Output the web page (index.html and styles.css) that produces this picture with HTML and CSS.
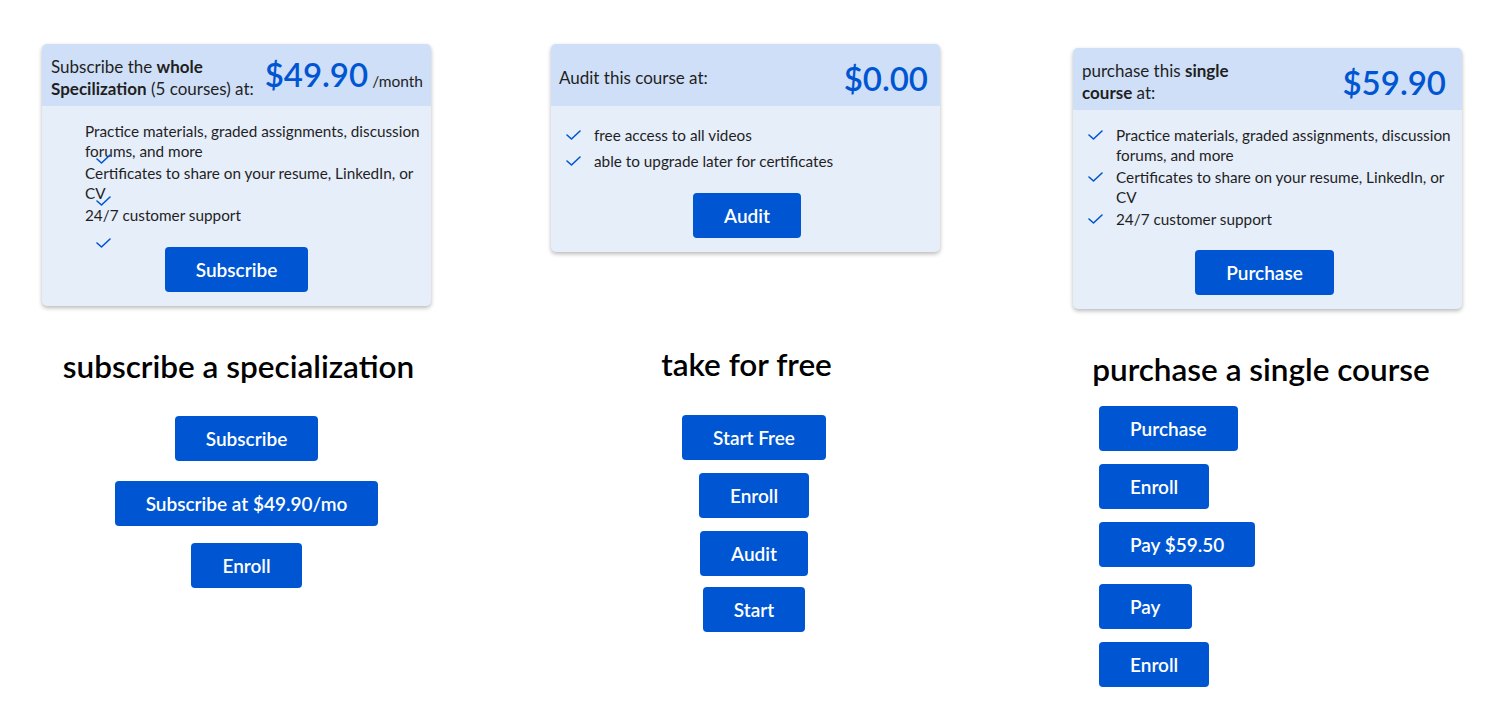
FILE: index.html
```html
<!DOCTYPE html>
<html lang="en">
<head>
<meta charset="utf-8">
<title>Pricing options</title>
<link rel="stylesheet" href="styles.css">
</head>
<body>
<main class="page">
  <div class="col col--1">
    <article class="card card--spec">
      <header class="card__head">
        <p class="card__title">Subscribe the <b>whole</b> <b>Specilization</b> (5 courses) at:</p>
        <p class="card__price">$49.90<span class="card__unit">/month</span></p>
      </header>
      <div class="card__body">
        <ul class="feats feats--broken">
          <li class="feat"><svg class="feat__check" viewBox="0 0 15 10" width="15" height="10"><polyline points="1,5 5.5,9 14,1"/></svg><span>Practice materials, graded assignments, discussion forums, and more</span></li>
          <li class="feat"><svg class="feat__check" viewBox="0 0 15 10" width="15" height="10"><polyline points="1,5 5.5,9 14,1"/></svg><span>Certificates to share on your resume, LinkedIn, or CV</span></li>
          <li class="feat"><svg class="feat__check" viewBox="0 0 15 10" width="15" height="10"><polyline points="1,5 5.5,9 14,1"/></svg><span>24/7 customer support</span></li>
        </ul>
        <button class="btn">Subscribe</button>
      </div>
    </article>
  </div>

  <div class="col col--2">
    <article class="card card--audit">
      <header class="card__head">
        <p class="card__title">Audit this course at:</p>
        <p class="card__price">$0.00</p>
      </header>
      <div class="card__body">
        <ul class="feats feats--loose">
          <li class="feat"><svg class="feat__check" viewBox="0 0 15 10" width="15" height="10"><polyline points="1,5 5.5,9 14,1"/></svg><span>free access to all videos</span></li>
          <li class="feat"><svg class="feat__check" viewBox="0 0 15 10" width="15" height="10"><polyline points="1,5 5.5,9 14,1"/></svg><span>able to upgrade later for certificates</span></li>
        </ul>
        <button class="btn">Audit</button>
      </div>
    </article>
  </div>

  <div class="col col--3">
    <article class="card card--single">
      <header class="card__head">
        <p class="card__title card__title--narrow">purchase this <b>single</b> <b>course</b> at:</p>
        <p class="card__price">$59.90</p>
      </header>
      <div class="card__body">
        <ul class="feats">
          <li class="feat"><svg class="feat__check" viewBox="0 0 15 10" width="15" height="10"><polyline points="1,5 5.5,9 14,1"/></svg><span>Practice materials, graded assignments, discussion forums, and more</span></li>
          <li class="feat"><svg class="feat__check" viewBox="0 0 15 10" width="15" height="10"><polyline points="1,5 5.5,9 14,1"/></svg><span>Certificates to share on your resume, LinkedIn, or CV</span></li>
          <li class="feat"><svg class="feat__check" viewBox="0 0 15 10" width="15" height="10"><polyline points="1,5 5.5,9 14,1"/></svg><span>24/7 customer support</span></li>
        </ul>
        <button class="btn">Purchase</button>
      </div>
    </article>
  </div>

  <section class="variant variant--spec">
    <h2 class="variant__title">subscribe a specialization</h2>
    <div class="variant__btns">
      <button class="btn">Subscribe</button>
      <button class="btn">Subscribe at $49.90/mo</button>
      <button class="btn btn--pulled">Enroll</button>
    </div>
  </section>

  <section class="variant variant--free">
    <h2 class="variant__title">take for free</h2>
    <div class="variant__btns">
      <button class="btn">Start Free</button>
      <button class="btn">Enroll</button>
      <button class="btn">Audit</button>
      <button class="btn btn--tight">Start</button>
    </div>
  </section>

  <section class="variant variant--single">
    <h2 class="variant__title">purchase a single course</h2>
    <div class="variant__btns">
      <button class="btn">Purchase</button>
      <button class="btn">Enroll</button>
      <button class="btn">Pay $59.50</button>
      <button class="btn btn--spaced">Pay</button>
      <button class="btn">Enroll</button>
    </div>
  </section>
</main>
</body>
</html>
```

FILE: styles.css
```css
* { box-sizing: border-box; }

html, body {
  margin: 0;
  background: #ffffff;
}

body {
  font-family: Lato, "Noto Sans", sans-serif;
  color: #1f1f1f;
}

.page {
  display: grid;
  grid-template-columns: 509px 522px 389px;
  grid-template-rows: 265px auto;
  padding: 44px 0 0 42px;
}

.col--3 { padding-top: 4px; }

/* ---------- card ---------- */
.card {
  width: 389px;
  background: #e6eefa;
  border-radius: 5px;
  box-shadow: 0 2px 4px rgba(0, 0, 0, 0.28);
  overflow: hidden;
}

.card__head {
  height: 62px;
  background: #cfdff7;
  display: flex;
  align-items: center;
  justify-content: space-between;
  padding: 5px 8px 0 9px;
}

.card--audit .card__head { padding-right: 12px; padding-left: 8px; }
.card--single .card__head { padding-right: 16px; }

.card__title {
  margin: 0;
  font-size: 17px;
  line-height: 22px;
  color: #1f1f1f;
}

.card__title b { font-weight: 700; }

.card--spec .card__title { width: 210px; }
.card__title--narrow { width: 160px; }

.card__price {
  flex: none;
  margin: 0;
  font-size: 33px;
  font-weight: 600;
  color: #0056d2;
  line-height: 40px;
  white-space: nowrap;
}

.card__unit {
  font-size: 15.5px;
  font-weight: 400;
  color: #1f1f1f;
  margin-left: 4px;
}

.card__body {
  display: flex;
  flex-direction: column;
  align-items: center;
  padding: 15px 0 14px;
}

.card--audit .card__body { padding-top: 19px; padding-left: 3px; }
.card--single .card__body { padding-right: 6px; }

.feats {
  list-style: none;
  margin: 0 0 21px;
  padding: 0 5px 0 15px;
  align-self: stretch;
  display: flex;
  flex-direction: column;
  gap: 2px;
  font-size: 15.3px;
  line-height: 20px;
}

.card--single .feats { margin-right: -6px; }
.card--audit .feats { margin-left: -3px; }

.feats--loose { gap: 6px; margin-bottom: 22px; }

.feat {
  display: flex;
  align-items: flex-start;
  gap: 13px;
}

.feat__check {
  flex: none;
  margin-top: 5px;
  fill: none;
  stroke: #0056d2;
  stroke-width: 1.6;
  stroke-linecap: round;
  stroke-linejoin: round;
}

/* first card: check marks slip below their lines */
.feats--broken { margin-bottom: 22px; }
.feats--broken .feat {
  position: relative;
  display: block;
  padding-left: 28px;
}
.feats--broken .feat__check {
  position: absolute;
  left: 39px;
  top: 33px;
  margin: 0;
}

/* ---------- buttons ---------- */
.btn {
  height: 45px;
  padding: 0 31px;
  border: 0;
  border-radius: 4px;
  background: #0056d2;
  color: #ffffff;
  font-family: Lato, "Noto Sans", sans-serif;
  font-size: 19px;
  font-weight: 600;
  cursor: pointer;
}

/* ---------- variants ---------- */
.variant {
  display: flex;
  flex-direction: column;
  width: 389px;
}

.variant__title {
  margin: 0;
  font-size: 31.5px;
  line-height: 36px;
  font-weight: 600;
  color: #000000;
  text-align: center;
  white-space: nowrap;
}

.variant__btns {
  display: flex;
  flex-direction: column;
  align-items: center;
  gap: 13px;
}

.variant--spec { padding-top: 39px; }
.variant--spec .variant__title { padding-left: 4px; }
.variant--spec .variant__btns { padding-left: 20px; gap: 20px; margin-top: 32px; }
.variant--spec .btn--pulled { margin-top: -3px; }

.variant--free { padding-top: 37px; }
.variant--free .variant__title { padding-left: 2px; }
.variant--free .variant__btns { padding-left: 17px; margin-top: 33px; }
.variant--free .btn--tight { margin-top: -2px; }

.variant--single { padding-top: 42px; }
.variant--single .variant__title { padding-right: 13px; }
.variant--single .variant__btns { align-items: flex-start; padding-left: 26px; margin-top: 19px; }
.variant--single .btn--spaced { margin-top: 4px; }
```
